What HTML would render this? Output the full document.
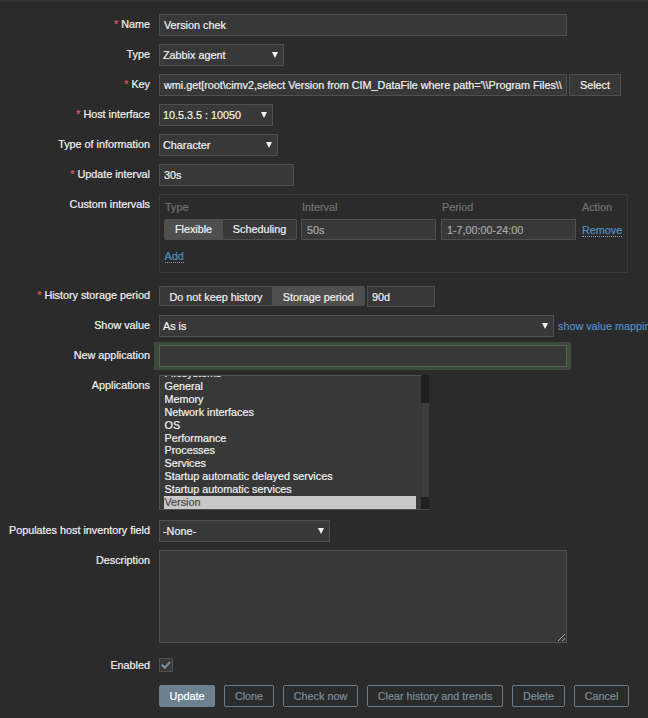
<!DOCTYPE html>
<html><head><meta charset="utf-8">
<style>
html,body{margin:0;padding:0;}
body{width:648px;height:718px;background:#2b2b2b;position:relative;overflow:hidden;font-family:"Liberation Sans",sans-serif;font-size:10.8px;color:#f2f2f2;-webkit-text-stroke:0.2px;}
.topline{position:absolute;left:0;top:0;width:648px;height:2px;background:linear-gradient(#363636,#2d2d2d);}
.a{position:absolute;box-sizing:border-box;white-space:nowrap;}
.lbl{position:absolute;right:498px;height:22px;line-height:22px;white-space:nowrap;color:#f2f2f2;}
.lbl i{font-style:normal;color:#e45959;margin-right:3px;}
.inp{position:absolute;box-sizing:border-box;height:22px;line-height:20px;background:#383838;border:1px solid #4f4f4f;padding:0 0 0 4px;white-space:nowrap;overflow:hidden;color:#f2f2f2;}
.sel{padding-left:3px;}
.sel:after{content:"";position:absolute;right:5px;top:7px;border-left:3.5px solid transparent;border-right:3.5px solid transparent;border-top:6px solid #f2f2f2;}
.btn{position:absolute;box-sizing:border-box;height:22px;line-height:20px;border:1px solid #687e8c;color:#788e9c;text-align:center;border-radius:2px;}
.hd{position:absolute;color:#737373;}
.lnk{position:absolute;color:#4f8fc6;white-space:nowrap;}
.dot{border-bottom:1px dotted #7ba0c6;line-height:12px;}
.seg{position:absolute;box-sizing:border-box;height:21px;line-height:19px;text-align:center;border:1px solid #4f4f4f;background:#383838;color:#f2f2f2;}
.seg.on{background:#4f4f4f;border-color:#4f4f4f;}
.li{position:absolute;left:4.5px;white-space:nowrap;height:13px;line-height:13px;}
</style></head><body>
<div class="topline"></div>

<!-- labels -->
<div class="lbl" style="top:13px"><i>*</i>Name</div>
<div class="lbl" style="top:43px">Type</div>
<div class="lbl" style="top:73px"><i>*</i>Key</div>
<div class="lbl" style="top:103px"><i>*</i>Host interface</div>
<div class="lbl" style="top:133px">Type of information</div>
<div class="lbl" style="top:163px"><i>*</i>Update interval</div>
<div class="lbl" style="top:193px">Custom intervals</div>
<div class="lbl" style="top:284px"><i>*</i>History storage period</div>
<div class="lbl" style="top:314px">Show value</div>
<div class="lbl" style="top:344px">New application</div>
<div class="lbl" style="top:374px">Applications</div>
<div class="lbl" style="top:519px">Populates host inventory field</div>
<div class="lbl" style="top:549px">Description</div>
<div class="lbl" style="top:654px">Enabled</div>

<!-- fields -->
<div class="inp" style="left:159px;top:14px;width:408px">Version chek</div>
<div class="inp sel" style="left:159px;top:44px;width:125px">Zabbix agent</div>
<div class="inp" style="left:159px;top:74px;width:408px">wmi.get[root\cimv2,select Version from CIM_DataFile where path='\\Program Files\\</div>
<div class="btn" style="left:569px;top:74px;width:52px;background:#383838;border-color:#4f4f4f;color:#f2f2f2;border-radius:0">Select</div>
<div class="inp sel" style="left:159px;top:104px;width:114px">10.5.3.5 : 10050</div>
<div class="inp sel" style="left:159px;top:134px;width:119px">Character</div>
<div class="inp" style="left:159px;top:164px;width:135px">30s</div>

<!-- custom intervals -->
<div class="a" style="left:159px;top:194px;width:468.6px;height:78.6px;border:1px solid #3a3a3a"></div>
<div class="hd" style="left:165px;top:201px">Type</div>
<div class="hd" style="left:302px;top:201px">Interval</div>
<div class="hd" style="left:442px;top:201px">Period</div>
<div class="hd" style="left:582px;top:201px">Action</div>
<div class="seg on" style="left:164px;top:219px;width:59px;border-radius:2px 0 0 2px">Flexible</div>
<div class="seg" style="left:222px;top:219px;width:75px;border-radius:0 2px 2px 0">Scheduling</div>
<div class="inp" style="left:301px;top:219px;width:135px;height:21px;line-height:20px;color:#a8a8a8;padding-left:5px">50s</div>
<div class="inp" style="left:441px;top:219px;width:135px;height:21px;line-height:20px;color:#a8a8a8;padding-left:5px">1-7,00:00-24:00</div>
<div class="lnk dot" style="left:582px;top:223.6px">Remove</div>
<div class="lnk dot" style="left:164.5px;top:250px">Add</div>

<!-- history -->
<div class="seg" style="left:159px;top:285.5px;width:114px;height:20.5px;line-height:20px;border-radius:2px 0 0 2px">Do not keep history</div>
<div class="seg on" style="left:272px;top:285.5px;width:92.5px;height:20.5px;line-height:20px;border-radius:0 2px 2px 0">Storage period</div>
<div class="inp" style="left:367px;top:285.5px;width:67.5px;height:21px;line-height:20px">90d</div>

<!-- show value -->
<div class="inp sel" style="left:159px;top:315px;width:395px">As is</div>
<div class="lnk" style="left:558px;top:315px;line-height:22px">show value mappings</div>

<!-- new application -->
<div class="a" style="left:154px;top:342px;width:417px;height:28px;background:#3d4a3e"></div>
<div class="inp" style="left:159px;top:345px;width:408px;border-color:#566257"></div>

<!-- applications list -->
<div class="a" style="left:159px;top:375px;width:270px;height:135px;background:#383838;border:1px solid #4f4f4f;border-right:none;overflow:hidden">
  <div class="li" style="top:-9px">Filesystems</div>
  <div class="li" style="top:4px">General</div>
  <div class="li" style="top:17px">Memory</div>
  <div class="li" style="top:30px">Network interfaces</div>
  <div class="li" style="top:43px">OS</div>
  <div class="li" style="top:56px">Performance</div>
  <div class="li" style="top:68px">Processes</div>
  <div class="li" style="top:81px">Services</div>
  <div class="li" style="top:94px">Startup automatic delayed services</div>
  <div class="li" style="top:107px">Startup automatic services</div>
  <div class="a" style="left:4px;top:120px;width:252px;height:12.5px;background:#c8c8c8"></div>
  <div class="li" style="top:120px;color:#4a4a4a">Version</div>
</div>
<div class="a" style="left:421.3px;top:375px;width:7.7px;height:27.5px;background:#1f1f1f"></div>
<div class="a" style="left:421.3px;top:402.5px;width:7.7px;height:94px;background:#3e3e3e;border-left:1px solid #343434"></div>
<div class="a" style="left:421.3px;top:496.5px;width:7.7px;height:12px;background:#1f1f1f"></div>

<!-- inventory -->
<div class="inp sel" style="left:159px;top:520px;width:171px">-None-</div>

<!-- description -->
<div class="inp" style="left:159px;top:550px;width:408px;height:93px"></div>
<svg class="a" style="left:557px;top:633px" width="9" height="9" viewBox="0 0 9 9"><path d="M1 8L8 1M5.2 8L8 5.2" stroke="#b0b0b0" stroke-width="1" fill="none"/></svg>

<!-- enabled -->
<div class="a" style="left:159px;top:658px;width:14px;height:14px;background:#383838;border:1px solid #4f4f4f"></div>
<svg class="a" style="left:159px;top:658px" width="14" height="14" viewBox="0 0 14 14"><path d="M2.8 6.8L5.8 9.8L11.2 3.8" stroke="#7a94a6" stroke-width="2" fill="none"/></svg>

<!-- buttons -->
<div class="btn" style="left:159px;top:685px;width:56px;background:#6b8191;border-color:#6b8191;color:#fff">Update</div>
<div class="btn" style="left:224px;top:685px;width:50px">Clone</div>
<div class="btn" style="left:283px;top:685px;width:75px">Check now</div>
<div class="btn" style="left:367px;top:685px;width:136px">Clear history and trends</div>
<div class="btn" style="left:512px;top:685px;width:53px">Delete</div>
<div class="btn" style="left:574px;top:685px;width:55px">Cancel</div>
</body></html>
